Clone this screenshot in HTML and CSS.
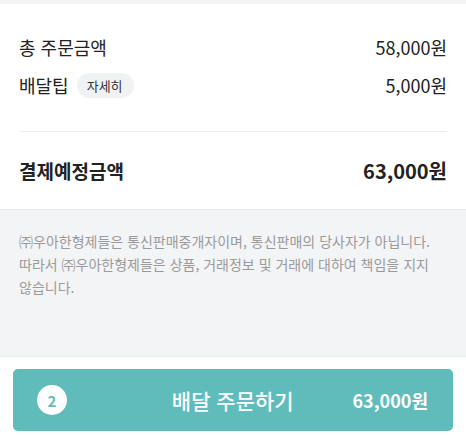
FILE: index.html
```html
<!DOCTYPE html>
<html lang="ko">
<head>
<meta charset="utf-8">
<link rel="stylesheet" href="styles.css">
</head>
<body>
<div class="top-strip"></div>
<section class="summary">
  <div class="row">
    <span class="label">총 주문금액</span>
    <span class="value">58,000원</span>
  </div>
  <div class="row">
    <span class="label">배달팁 <span class="pill">자세히</span></span>
    <span class="value">5,000원</span>
  </div>
  <div class="divider"></div>
  <div class="row total">
    <span class="label">결제예정금액</span>
    <span class="value">63,000원</span>
  </div>
</section>
<section class="notice">
  <p>㈜우아한형제들은 통신판매중개자이며, 통신판매의 당사자가 아닙니다.<br>따라서 ㈜우아한형제들은 상품, 거래정보 및 거래에 대하여 책임을 지지<br>않습니다.</p>
</section>
<footer class="bottom">
  <button class="order-btn">
    <span class="count">2</span>
    <span class="btn-label">배달 주문하기</span>
    <span class="btn-price">63,000원</span>
  </button>
</footer>
</body>
</html>
```
FILE: styles.css
```css
* { box-sizing: border-box; }
html, body { margin: 0; padding: 0; }
body {
  width: 466px;
  height: 436px;
  overflow: hidden;
  background: #fff;
  font-family: "Noto Sans CJK KR", "Noto Sans", sans-serif;
  color: #222;
}
.top-strip { height: 4px; background: #f2f3f5; }
.summary { padding: 24px 19px 20px; }
.row {
  display: flex;
  justify-content: space-between;
  align-items: center;
  height: 38px;
}
.label { display: flex; align-items: center; font-size: 18px; gap: 8px; }
.value { font-size: 18px; }
.pill {
  display: inline-flex;
  align-items: center;
  justify-content: center;
  height: 25px;
  padding: 0 11px 0 10px;
  border-radius: 13px;
  background: #f1f2f4;
  font-size: 13px;
  color: #333;
}
.divider { height: 1px; background: #ececec; margin: 27px 0 19px; }
.total .label { font-size: 19px; font-weight: 700; }
.total .value { font-size: 20px; font-weight: 700; }
.notice {
  background: #f3f4f6;
  border-top: 1px solid #ebecee;
  border-bottom: 1px solid #ebecee;
  height: 148px;
  padding: 20px 4px 0 19px;
}
.notice p {
  margin: 0;
  font-size: 14px;
  line-height: 23px;
  color: #9a9a9a;
  white-space: nowrap;
}
.bottom { padding: 12px 13px 0; }
.order-btn {
  width: 440px;
  height: 62px;
  border: none;
  border-radius: 5px;
  background: #5fbcbb;
  display: flex;
  align-items: center;
  padding: 0 25px 0 24px;
  font-family: inherit;
  color: #fff;
}
.count {
  width: 30px;
  height: 30px;
  border-radius: 50%;
  background: #fff;
  color: #5fbcbb;
  font-size: 15px;
  font-weight: 700;
  display: flex;
  align-items: center;
  justify-content: center;
}
.btn-label {
  flex: 1;
  text-align: center;
  font-size: 21px;
  font-weight: 500;
  padding-left: 46px;
}
.btn-price { font-size: 18px; font-weight: 700; }
```
